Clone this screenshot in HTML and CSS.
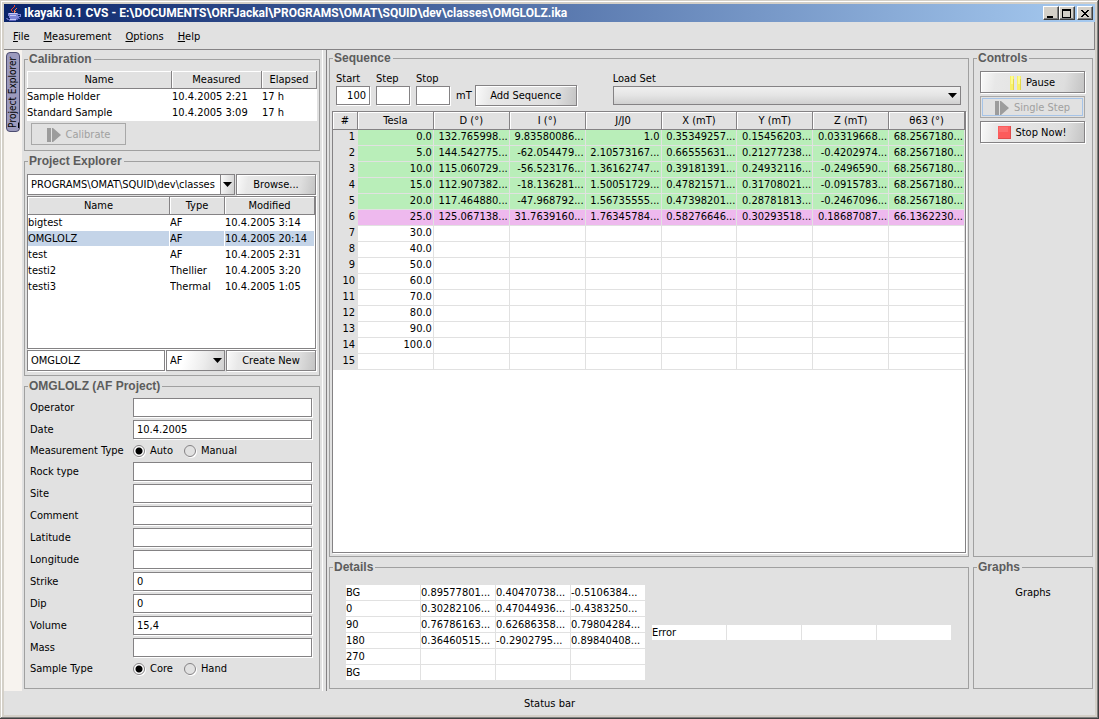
FILE: index.html
```
<!DOCTYPE html>
<html lang="en">
<head>
<meta charset="utf-8">
<title>Ikayaki 0.1 CVS</title>
<link rel="stylesheet" href="styles.css">
</head>
<body>
<div class="window">
  <header class="titlebar">
    <svg class="app-icon" width="16" height="16" viewBox="0 0 16 16" aria-hidden="true">
      <path d="M8 0h1v2h-1v1h-1v1h-1v2h1v1h-1v-1h-1v-2h1v-1h1v-1h1z" fill="#e8402c"/>
      <path d="M10 3h1v1h-1v1h-1v1h1v1h-1v1h-1v-3h1v-1h1z" fill="#f07850"/>
      <path d="M2 8h10v1h3v3h-2v1h-2v1H4v-1H3v-2H2z" fill="#7c84d8"/>
      <path d="M3 8h8v1H3zM4 10h6v1H4z" fill="#c4c8f8"/>
      <path d="M12 10h2v1h-2z" fill="#0c2870"/>
      <path d="M0 13h2v1h9v-1h3v1h-2v1h-2v1H3v-1H1v-1H0z" fill="#5c64bc"/>
      <path d="M4 14h6v1H4z" fill="#c4c8f8"/>
    </svg>
    <h1>Ikayaki 0.1 CVS - E:\DOCUMENTS\ORFJackal\PROGRAMS\OMAT\SQUID\dev\classes\OMGLOLZ.ika</h1>
    <div class="window-buttons">
      <button type="button" aria-label="Minimize"><svg width="10" height="9" viewBox="0 0 10 9"><path d="M1 7h6v2H1z"/></svg></button>
      <button type="button" aria-label="Maximize"><svg width="10" height="9" viewBox="0 0 10 9"><path fill-rule="evenodd" d="M0 0h9v9H0zM1 2v6h7V2z"/></svg></button>
      <button type="button" class="close" aria-label="Close"><svg width="10" height="9" viewBox="0 0 10 9"><path d="M1 1h2v1h1v1h2V2h1V1h2v1H8v1H7v1H6v1h1v1h1v1h1v1H7V7H6V6H4v1H3v1H1V7h1V6h1V5h1V4H3V3H2V2H1z"/></svg></button>
    </div>
  </header>
  <nav class="menubar">
    <button type="button"><u>F</u>ile</button>
    <button type="button"><u>M</u>easurement</button>
    <button type="button"><u>O</u>ptions</button>
    <button type="button"><u>H</u>elp</button>
  </nav>
  <main class="main">
    <div class="rail"><button type="button" class="tab"><u>P</u>roject Explorer</button></div>
    <section class="left">
      <fieldset class="panel">
        <legend>Calibration</legend>
        <table class="list calibration">
          <colgroup><col><col class="w90"><col class="w55"></colgroup>
          <thead><tr><th>Name</th><th>Measured</th><th>Elapsed</th></tr></thead>
          <tbody>
            <tr><td>Sample Holder</td><td>10.4.2005 2:21</td><td>17 h</td></tr>
            <tr><td>Standard Sample</td><td>10.4.2005 3:09</td><td>17 h</td></tr>
          </tbody>
        </table>
        <button type="button" class="btn calibrate" disabled>
          <svg width="15" height="16" viewBox="0 0 15 16"><path d="M0 1h4v14H0zM5 1h1l8 7-8 7H5z" fill="#9c9c9c"/></svg>Calibrate</button>
      </fieldset>
      <fieldset class="panel explorer">
        <legend>Project Explorer</legend>
        <div class="row">
          <span class="combo path"><select aria-label="Directory"><option>PROGRAMS\OMAT\SQUID\dev\classes</option></select></span>
          <button type="button" class="btn browse">Browse...</button>
        </div>
        <div class="scroll files">
          <table class="list">
            <colgroup><col><col class="w55"><col class="w90"></colgroup>
            <thead><tr><th>Name</th><th>Type</th><th>Modified</th></tr></thead>
            <tbody>
              <tr><td>bigtest</td><td>AF</td><td>10.4.2005 3:14</td></tr>
              <tr class="selected"><td>OMGLOLZ</td><td>AF</td><td>10.4.2005 20:14</td></tr>
              <tr><td>test</td><td>AF</td><td>10.4.2005 2:31</td></tr>
              <tr><td>testi2</td><td>Thellier</td><td>10.4.2005 3:20</td></tr>
              <tr><td>testi3</td><td>Thermal</td><td>10.4.2005 1:05</td></tr>
            </tbody>
          </table>
        </div>
        <div class="row">
          <input class="field name" aria-label="Project name" value="OMGLOLZ">
          <span class="combo type"><select aria-label="Project type"><option>AF</option></select></span>
          <button type="button" class="btn create">Create New</button>
        </div>
      </fieldset>
      <fieldset class="panel project">
        <legend>OMGLOLZ (AF Project)</legend>
        <div class="form">
          <label for="operator">Operator</label><input class="field" id="operator">
          <label for="date">Date</label><input class="field" id="date" value="10.4.2005">
          <span>Measurement Type</span>
          <div class="radios"><label><input type="radio" name="mtype" checked>Auto</label><label><input type="radio" name="mtype">Manual</label></div>
          <label for="rock">Rock type</label><input class="field" id="rock">
          <label for="site">Site</label><input class="field" id="site">
          <label for="comment">Comment</label><input class="field" id="comment">
          <label for="lat">Latitude</label><input class="field" id="lat">
          <label for="lon">Longitude</label><input class="field" id="lon">
          <label for="strike">Strike</label><input class="field" id="strike" value="0">
          <label for="dip">Dip</label><input class="field" id="dip" value="0">
          <label for="volume">Volume</label><input class="field" id="volume" value="15,4">
          <label for="mass">Mass</label><input class="field" id="mass">
          <span>Sample Type</span>
          <div class="radios"><label><input type="radio" name="stype" checked>Core</label><label><input type="radio" name="stype">Hand</label></div>
        </div>
      </fieldset>
    </section>
    <div class="splitter"></div>
    <section class="middle">
      <fieldset class="panel sequence">
        <legend>Sequence</legend>
        <div class="seqbar">
          <label>Start<input class="field num" value="100"></label>
          <label>Step<input class="field num"></label>
          <label>Stop<input class="field num"></label>
          <span class="unit">mT</span>
          <button type="button" class="btn add">Add Sequence</button>
          <label class="loadset">Load Set<span class="combo set"><select><option></option></select></span></label>
        </div>
        <div class="scroll steps">
          <table class="grid">
            <colgroup><col class="w25"><col><col><col><col><col><col><col><col></colgroup>
            <thead><tr><th>#</th><th>Tesla</th><th>D (°)</th><th>I (°)</th><th>J/J0</th><th>X (mT)</th><th>Y (mT)</th><th>Z (mT)</th><th>θ63 (°)</th></tr></thead>
            <tbody>
              <tr class="done"><th>1</th><td>0.0</td><td>132.765998...</td><td>9.83580086...</td><td>1.0</td><td>0.35349257...</td><td>0.15456203...</td><td>0.03319668...</td><td>68.2567180...</td></tr>
              <tr class="done"><th>2</th><td>5.0</td><td>144.542775...</td><td>-62.054479...</td><td>2.10573167...</td><td>0.66555631...</td><td>0.21277238...</td><td>-0.4202974...</td><td>68.2567180...</td></tr>
              <tr class="done"><th>3</th><td>10.0</td><td>115.060729...</td><td>-56.523176...</td><td>1.36162747...</td><td>0.39181391...</td><td>0.24932116...</td><td>-0.2496590...</td><td>68.2567180...</td></tr>
              <tr class="done"><th>4</th><td>15.0</td><td>112.907382...</td><td>-18.136281...</td><td>1.50051729...</td><td>0.47821571...</td><td>0.31708021...</td><td>-0.0915783...</td><td>68.2567180...</td></tr>
              <tr class="done"><th>5</th><td>20.0</td><td>117.464880...</td><td>-47.968792...</td><td>1.56735555...</td><td>0.47398201...</td><td>0.28781813...</td><td>-0.2467096...</td><td>68.2567180...</td></tr>
              <tr class="active"><th>6</th><td>25.0</td><td>125.067138...</td><td>31.7639160...</td><td>1.76345784...</td><td>0.58276646...</td><td>0.30293518...</td><td>0.18687087...</td><td>66.1362230...</td></tr>
              <tr><th>7</th><td>30.0</td><td></td><td></td><td></td><td></td><td></td><td></td><td></td></tr>
              <tr><th>8</th><td>40.0</td><td></td><td></td><td></td><td></td><td></td><td></td><td></td></tr>
              <tr><th>9</th><td>50.0</td><td></td><td></td><td></td><td></td><td></td><td></td><td></td></tr>
              <tr><th>10</th><td>60.0</td><td></td><td></td><td></td><td></td><td></td><td></td><td></td></tr>
              <tr><th>11</th><td>70.0</td><td></td><td></td><td></td><td></td><td></td><td></td><td></td></tr>
              <tr><th>12</th><td>80.0</td><td></td><td></td><td></td><td></td><td></td><td></td><td></td></tr>
              <tr><th>13</th><td>90.0</td><td></td><td></td><td></td><td></td><td></td><td></td><td></td></tr>
              <tr><th>14</th><td>100.0</td><td></td><td></td><td></td><td></td><td></td><td></td><td></td></tr>
              <tr><th>15</th><td></td><td></td><td></td><td></td><td></td><td></td><td></td><td></td></tr>
            </tbody>
          </table>
        </div>
      </fieldset>
      <fieldset class="panel details">
        <legend>Details</legend>
        <div class="detail-tables">
          <table class="cells">
            <tr><td>BG</td><td>0.89577801...</td><td>0.40470738...</td><td>-0.5106384...</td></tr>
            <tr><td>0</td><td>0.30282106...</td><td>0.47044936...</td><td>-0.4383250...</td></tr>
            <tr><td>90</td><td>0.76786163...</td><td>0.62686358...</td><td>0.79804284...</td></tr>
            <tr><td>180</td><td>0.36460515...</td><td>-0.2902795...</td><td>0.89840408...</td></tr>
            <tr><td>270</td><td></td><td></td><td></td></tr>
            <tr><td>BG</td><td></td><td></td><td></td></tr>
          </table>
          <table class="cells">
            <tr><td>Error</td><td></td><td></td><td></td></tr>
          </table>
        </div>
      </fieldset>
    </section>
    <section class="right">
      <fieldset class="panel controls">
        <legend>Controls</legend>
        <div class="stack">
          <button type="button" class="btn"><svg width="12" height="16" viewBox="0 0 12 16"><path d="M0 1h4v14H0zM7 1h4v14H7z" fill="#f8f068"/><path d="M1 1h2v8H1zM8 1h2v8H8z" fill="#fcfc90"/><path d="M3 4h1v11H3zM10 4h1v11h-1z" fill="#e4d848"/></svg>Pause</button>
          <button type="button" class="btn focus" disabled><svg width="15" height="16" viewBox="0 0 15 16"><path d="M0 1h4v14H0zM5 1h1l8 7-8 7H5z" fill="#9c9c9c"/></svg>Single Step</button>
          <button type="button" class="btn"><svg width="13" height="14" viewBox="0 0 13 14"><path d="M0 0h13v13H0z" fill="#fc5c5c"/><path d="M1 1h9v5H1z" fill="#fc7070"/><path d="M12 0h1v13H0v-1h12z" fill="#e04c4c"/></svg>Stop Now!</button>
        </div>
      </fieldset>
      <fieldset class="panel graphs">
        <legend>Graphs</legend>
        <p>Graphs</p>
      </fieldset>
    </section>
  </main>
  <footer class="status">Status bar</footer>
</div>
</body>
</html>
```
FILE: styles.css
```
* { box-sizing: border-box; }

body {
  margin: 0;
  background: #d4d0c8;
  color: #000;
  font: 11px/14px "DejaVu Sans Condensed", "Noto Sans", sans-serif;
}

button, input, select { font: inherit; color: inherit; margin: 0; }

.window {
  display: flex;
  flex-direction: column;
  min-height: 100vh;
  padding: 4px;
  background: #d4d0c8;
  box-shadow: inset -1px -1px #404040, inset 1px 1px #d4d0c8, inset -2px -2px #808080, inset 2px 2px #fff;
}

/* Title bar */
.titlebar {
  display: flex;
  align-items: center;
  height: 18px;
  padding: 0 2px;
  gap: 2px;
  background: linear-gradient(90deg, #0a246a, #a6caf0);
}
.titlebar h1 {
  flex: 1;
  margin: 0;
  color: #fff;
  font: bold 12px/16px Roboto, sans-serif;
  white-space: nowrap;
}
.window-buttons { display: flex; }
.window-buttons button {
  display: flex;
  align-items: flex-start;
  justify-content: center;
  width: 16px;
  height: 14px;
  padding: 2px 0 0;
  border: 1px solid;
  border-color: #fff #404040 #404040 #fff;
  background: #d4d0c8;
  box-shadow: inset -1px -1px #808080;
}
.window-buttons .close { margin-left: 2px; }

/* Menu bar */
.menubar {
  display: flex;
  gap: 14px;
  height: 28px;
  padding: 2px 9px 0;
  background: #e1e1e1;
  border: solid #848284;
  border-width: 0 1px 1px 0;
}
.menubar button { padding: 0; border: 0; background: none; }

/* Main columns */
.main { display: flex; flex: 1; background: #e1e1e1; }
.rail { width: 18px; padding: 2px; background: #f7f3ef; }
.tab {
  width: 14px;
  height: 80px;
  padding: 0;
  border: 1px solid #4c4c70;
  border-radius: 4px;
  background: #9c9abd;
  font-size: 10px;
  line-height: 12px;
  text-align: center;
  writing-mode: vertical-rl;
  transform: rotate(180deg);
  white-space: nowrap;
}
.left { display: flex; flex-direction: column; gap: 3px; width: 300px; padding: 2px; }
.splitter { width: 5px; border-left: 1px solid #fff; border-right: 1px solid #848284; }
.middle { display: flex; flex: 1; flex-direction: column; gap: 3px; min-width: 0; padding: 1px 2px 2px; }
.right { display: flex; flex-direction: column; gap: 3px; width: 124px; padding: 1px 2px 2px; }

/* Titled panels */
.panel {
  min-width: 0;
  margin: 0;
  padding: 4px 2px;
  border: 1px solid #a0a0a0;
}
.panel legend {
  margin-left: 1px;
  padding: 0 2px 0 1px;
  color: #5c5c5c;
  font: bold 12px/15px "Liberation Sans", sans-serif;
}
.project, .sequence, .controls { flex: 1; }
.details, .graphs { height: 129px; }

/* Buttons */
.btn {
  display: flex;
  align-items: center;
  justify-content: center;
  gap: 4px;
  height: 22px;
  padding: 1px 0 0;
  border: 1px solid #848284;
  background: linear-gradient(100deg, #fafafa, #e8e8e8 15%, #dedede 80%, #c4c4c4);
  box-shadow: 1px 1px #fff, inset 1px 1px #fff;
  white-space: nowrap;
}
.btn:disabled { border-color: #a8a8a8; background: #e1e1e1; box-shadow: none; color: #a0a0a0; }
.btn.focus { box-shadow: inset 0 0 0 1px #e1e1e1, inset 0 0 0 2px #a6c4e8; }

/* Text fields and combo boxes */
.field {
  min-width: 0;
  height: 19px;
  padding: 0 3px;
  border: 1px solid #848284;
  border-radius: 0;
  background: #fff;
  box-shadow: 1px 1px #fff;
}
.combo { position: relative; display: block; height: 21px; }
.combo select {
  width: 100%;
  height: 100%;
  padding: 0 3px;
  border: 1px solid #848284;
  border-radius: 0;
  background: #fff;
  appearance: none;
}
.combo::after {
  content: "";
  position: absolute;
  right: 3px;
  top: 8px;
  width: 9px;
  height: 5px;
  background: #000;
  clip-path: polygon(0 0, 100% 0, 50% 100%);
  pointer-events: none;
}

/* Tables */
table { border-collapse: separate; border-spacing: 0; table-layout: fixed; }
td, th { overflow: hidden; padding: 0; font-weight: normal; white-space: nowrap; }
thead th {
  height: 18px;
  padding-top: 1px;
  border: solid #848284;
  border-width: 0 1px 1px 0;
  background: #e1e1e1;
  box-shadow: inset 1px 1px #fff;
  text-align: center;
}
.list { width: 100%; background: #fff; }
.list td { height: 16px; line-height: 16px; }
.selected td { border-right: 1px solid #fff; border-bottom: 1px solid #fff; background: #c4d4e8; background-clip: padding-box; line-height: 15px; }
.w25 { width: 25px; }
.w55 { width: 55px; }
.w90 { width: 90px; }

.calibrate { width: 95px; margin: 2px 4px 1px; }

.row { display: flex; gap: 1px; }
.explorer { display: flex; flex-direction: column; gap: 1px; padding-right: 3px; }
.explorer .row:first-of-type { margin-top: 1px; }
.path { flex: 1; }
.path::before {
  content: "";
  position: absolute;
  right: 1px;
  top: 1px;
  width: 13px;
  height: 19px;
  border-left: 1px solid #848284;
  background: linear-gradient(100deg, #fafafa, #d0d0d0);
  pointer-events: none;
}
.explorer .btn, .explorer .field { height: 21px; }
.browse { width: 80px; }
.name { flex: 1; }
.type { width: 59px; }
.combo.type select { background: linear-gradient(105deg, #fff 30%, #ececec 65%, #d0d0d0); }
.combo.set select { background: linear-gradient(to bottom, #f0f0f0, #e4e4e4 50%, #d0d0d0); }
.create { width: 90px; }
.scroll { border: 1px solid #848284; background: #fff; box-shadow: 1px 1px #fff; }
.files { height: 153px; }

/* Project form */
.form {
  display: grid;
  grid-template-columns: 103px 1fr;
  row-gap: 3px;
  align-items: center;
  padding: 0 5px 0 3px;
}
.form > label, .form > span { padding-top: 1px; }
.radios { display: flex; gap: 11px; height: 17px; padding-top: 1px; }
.radios label { display: flex; align-items: center; gap: 5px; }
.radios input {
  appearance: none;
  width: 12px;
  height: 12px;
  border: 1px solid #848284;
  border-radius: 50%;
  background: #e1e1e1;
  box-shadow: 1px 1px #fff;
}
.radios input:checked { background: radial-gradient(circle, #000 3px, #fff 4px); }

/* Sequence panel */
.sequence { display: flex; flex-direction: column; gap: 5px; padding-bottom: 3px; }
.seqbar { display: flex; align-items: flex-end; gap: 3px; padding: 2px 5px 0 4px; }
.seqbar label { display: flex; flex-direction: column; margin-right: 3px; padding-bottom: 1px; }
.num { width: 34px; text-align: right; }
.unit { padding-bottom: 3px; }
.add { width: 102px; height: 21px; }
.seqbar .loadset { flex: 1; margin: 0 0 0 33px; }
.set { height: 19px; }
.set::after { top: 7px; right: 4px; }
.steps { flex: 1; }
.grid { width: 100%; }
.grid tbody th { height: 16px; padding-right: 3px; background: #e1e1e1; text-align: right; line-height: 14px; vertical-align: top; }
.grid td {
  height: 16px;
  padding-right: 1px;
  border: solid #e1e1e1;
  border-width: 0 1px 1px 0;
  line-height: 14px;
  text-align: right;
  vertical-align: top;
}
.done td { background: #b9eeb9; }
.active td { background: #eeb9ee; }

/* Details, controls, graphs */
.detail-tables { display: flex; align-items: center; justify-content: center; gap: 6px; padding-top: 6px; }
.cells { width: 300px; }
.cells td {
  height: 16px;
  padding: 0;
  border: solid #e1e1e1;
  border-width: 0 1px 1px 0;
  background: #fff;
  line-height: 15px;
}
.stack { display: flex; flex-direction: column; gap: 3px; padding: 1px 5px 0 4px; }
.graphs p { margin: 7px 0 0; text-align: center; }

.status { height: 24px; padding-top: 1px; background: #e1e1e1; line-height: 24px; text-align: center; }
```
